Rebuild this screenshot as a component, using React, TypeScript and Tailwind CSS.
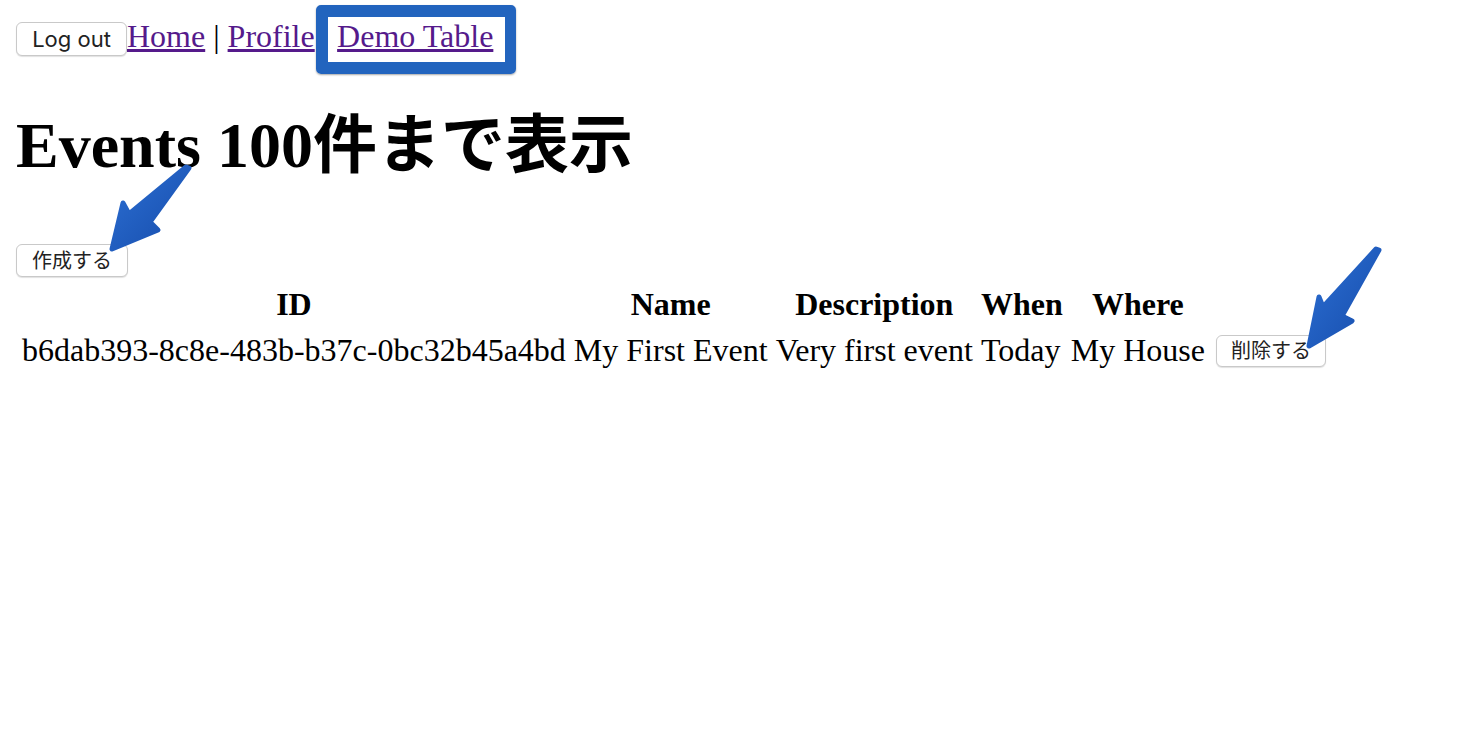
import React from "react";

const rows = [
  {
    id: "b6dab393-8c8e-483b-b37c-0bc32b45a4bd",
    name: "My First Event",
    description: "Very first event",
    when: "Today",
    where: "My House",
  },
];

const btn =
  "items-center justify-center bg-white border border-[#c9c9c9] rounded-[6px] shadow-[0_1px_1px_rgba(0,0,0,0.12)] text-[#222] leading-none";
const btnFont = { fontFamily: 'Inter, "Noto Sans CJK JP", sans-serif' };

function Arrow({ points }: { points: string }) {
  return (
    <polygon
      points={points}
      fill="url(#arrowGrad)"
      stroke="url(#arrowGrad)"
      strokeWidth={5}
      strokeLinejoin="round"
    />
  );
}

export default function App() {
  return (
    <div
      className="relative min-h-screen bg-white p-4 text-[32px] text-black"
      style={{ fontFamily: '"Liberation Serif", "Noto Sans CJK JP", serif' }}
    >
      <div className="-mt-[4px] h-[39px]">
        <button className={btn + " inline-flex h-[34px] w-[111px] text-[22px]"} style={btnFont}>
          Log out
        </button>
        <a href="#" className="text-[#551A8B] underline">Home</a>
        {" | "}
        <a href="#" className="text-[#551A8B] underline">Profile</a>
        {" | "}
        <a href="#" className="text-[#551A8B] underline">Demo Table</a>
      </div>

      <h1 className="mt-[58px] mb-[61px] text-[64px] font-bold leading-[74px]">Events 100件まで表示</h1>

      <div>
        <button className={btn + " flex h-[33px] w-[112px] text-[20px]"} style={btnFont}>
          作成する
        </button>
      </div>

      <table className="mt-[3px] border-separate border-spacing-[4px] leading-[37px]">
        <thead>
          <tr className="h-[41px]">
            <th className="p-[2px] align-middle font-bold">ID</th>
            <th className="p-[2px] align-middle font-bold">Name</th>
            <th className="p-[2px] align-middle font-bold">Description</th>
            <th className="p-[2px] align-middle font-bold">When</th>
            <th className="p-[2px] align-middle font-bold">Where</th>
            <th className="p-[2px]"></th>
          </tr>
        </thead>
        <tbody>
          {rows.map((r) => (
            <tr key={r.id} className="h-[43px]">
              <td className="p-[2px] align-middle">{r.id}</td>
              <td className="p-[2px] align-middle">{r.name}</td>
              <td className="p-[2px] align-middle">{r.description}</td>
              <td className="p-[2px] align-middle">{r.when}</td>
              <td className="p-[2px] align-middle">{r.where}</td>
              <td className="p-[2px] pl-[5px] align-middle">
                <button className={btn + " flex h-[32px] w-[110px] text-[20px]"} style={btnFont}>
                  削除する
                </button>
              </td>
            </tr>
          ))}
        </tbody>
      </table>

      {/* annotation frame around Demo Table */}
      <div className="pointer-events-none absolute left-[316px] top-[5px] h-[69px] w-[200px] rounded-[5px] border-[12px] border-r-[11px] border-[#2264be] shadow-[0_1px_2px_rgba(0,0,0,0.35)]" />

      {/* annotation arrows */}
      <svg className="pointer-events-none absolute left-0 top-0" width="1483" height="747">
        <defs>
          <linearGradient id="arrowGrad" x1="0" y1="0" x2="1" y2="1">
            <stop offset="0" stopColor="#2c6fd3" />
            <stop offset="1" stopColor="#164cab" />
          </linearGradient>
        </defs>
        <Arrow points="189,168 150,222 158,230 112,249 123,203 129,214 186,167" />
        <Arrow points="1379,250 1342,316 1352,321 1309,346 1319,297 1323,307 1376,249" />
      </svg>
    </div>
  );
}
